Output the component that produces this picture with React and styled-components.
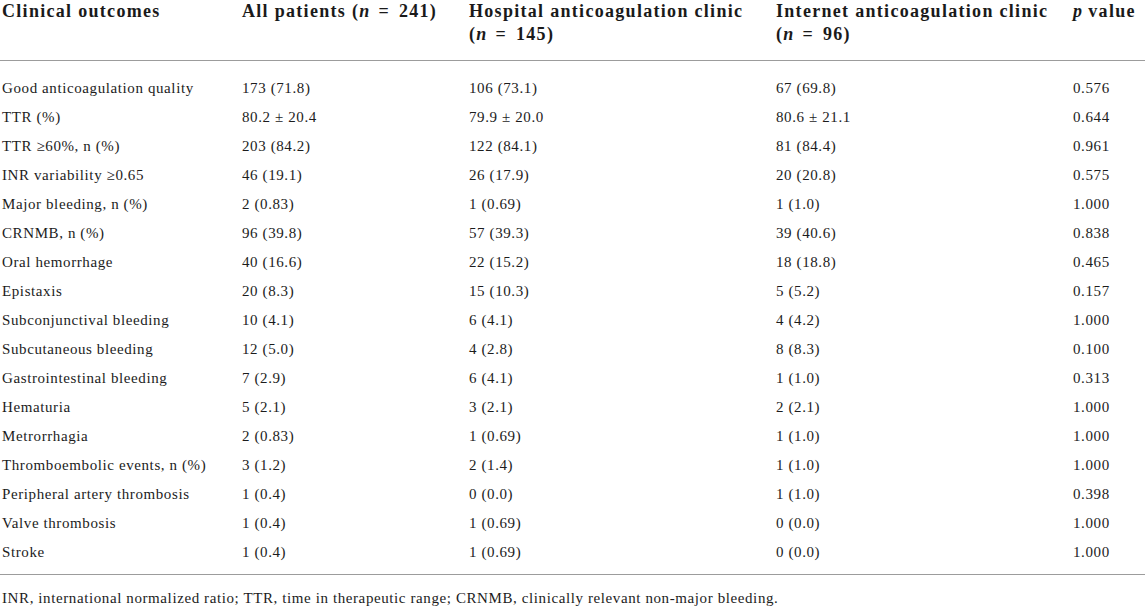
import React from 'react';
import styled, { createGlobalStyle } from 'styled-components';

const GlobalStyle = createGlobalStyle`
  html, body {
    margin: 0;
    padding: 0;
    background: #ffffff;
  }
  body {
    font-family: 'Liberation Serif', 'Times New Roman', serif;
    color: #1c1c1c;
    overflow: hidden;
  }
`;

const Wrapper = styled.div`
  width: 1145px;
  height: 613px;
  overflow: hidden;
`;

const Table = styled.table`
  width: 1145px;
  border-collapse: collapse;
  table-layout: fixed;
`;

const HeadCell = styled.th`
  text-align: left;
  vertical-align: top;
  padding: 0 0 14px 2px;
  font-size: 18px;
  line-height: 23px;
  font-weight: 700;
  letter-spacing: 1.3px;
  color: #1a1a1a;
  white-space: nowrap;
  border-bottom: 1px solid #9c9c9c;
`;

const Italic = styled.i`
  font-weight: 700;
  letter-spacing: 0.5px;
`;

const Eq = styled.span`
  padding: 0 3px;
`;

const Spacer = styled.tr`
  height: ${({ size }) => size}px;
`;

const Row = styled.tr`
  height: 29px;
`;

const Cell = styled.td`
  padding: 0 0 0 2px;
  font-size: 15px;
  line-height: 29px;
  letter-spacing: 0.6px;
  white-space: nowrap;
  vertical-align: middle;
`;

const BottomRule = styled.tr`
  height: 8px;
  td {
    border-bottom: 1px solid #9c9c9c;
    padding: 0;
  }
`;

const Footnote = styled.p`
  margin: 13px 0 0;
  padding-left: 2px;
  font-size: 15px;
  line-height: 20px;
  letter-spacing: 0.6px;
  white-space: nowrap;
`;

const rows = [
  ['Good anticoagulation quality', '173 (71.8)', '106 (73.1)', '67 (69.8)', '0.576'],
  ['TTR (%)', '80.2 ± 20.4', '79.9 ± 20.0', '80.6 ± 21.1', '0.644'],
  ['TTR ≥60%, n (%)', '203 (84.2)', '122 (84.1)', '81 (84.4)', '0.961'],
  ['INR variability ≥0.65', '46 (19.1)', '26 (17.9)', '20 (20.8)', '0.575'],
  ['Major bleeding, n (%)', '2 (0.83)', '1 (0.69)', '1 (1.0)', '1.000'],
  ['CRNMB, n (%)', '96 (39.8)', '57 (39.3)', '39 (40.6)', '0.838'],
  ['Oral hemorrhage', '40 (16.6)', '22 (15.2)', '18 (18.8)', '0.465'],
  ['Epistaxis', '20 (8.3)', '15 (10.3)', '5 (5.2)', '0.157'],
  ['Subconjunctival bleeding', '10 (4.1)', '6 (4.1)', '4 (4.2)', '1.000'],
  ['Subcutaneous bleeding', '12 (5.0)', '4 (2.8)', '8 (8.3)', '0.100'],
  ['Gastrointestinal bleeding', '7 (2.9)', '6 (4.1)', '1 (1.0)', '0.313'],
  ['Hematuria', '5 (2.1)', '3 (2.1)', '2 (2.1)', '1.000'],
  ['Metrorrhagia', '2 (0.83)', '1 (0.69)', '1 (1.0)', '1.000'],
  ['Thromboembolic events, n (%)', '3 (1.2)', '2 (1.4)', '1 (1.0)', '1.000'],
  ['Peripheral artery thrombosis', '1 (0.4)', '0 (0.0)', '1 (1.0)', '0.398'],
  ['Valve thrombosis', '1 (0.4)', '1 (0.69)', '0 (0.0)', '1.000'],
  ['Stroke', '1 (0.4)', '1 (0.69)', '0 (0.0)', '1.000'],
];

const Count = ({ n }) => (
  <>
    (<Italic>n</Italic>
    <Eq> = </Eq>
    {n})
  </>
);

const App = () => (
  <Wrapper>
    <GlobalStyle />
    <Table>
      <colgroup>
        <col style={{ width: 240 }} />
        <col style={{ width: 227 }} />
        <col style={{ width: 307 }} />
        <col style={{ width: 297 }} />
        <col style={{ width: 74 }} />
      </colgroup>
      <thead>
        <tr>
          <HeadCell>Clinical outcomes</HeadCell>
          <HeadCell>
            All patients <Count n={241} />
          </HeadCell>
          <HeadCell>
            Hospital anticoagulation clinic
            <br />
            <Count n={145} />
          </HeadCell>
          <HeadCell>
            Internet anticoagulation clinic
            <br />
            <Count n={96} />
          </HeadCell>
          <HeadCell>
            <Italic>p</Italic> value
          </HeadCell>
        </tr>
      </thead>
      <tbody>
        <Spacer size={13} />
        {rows.map(r => (
          <Row key={r[0]}>
            {r.map((c, i) => (
              <Cell key={i}>{c}</Cell>
            ))}
          </Row>
        ))}
        <BottomRule>
          <td colSpan={5} />
        </BottomRule>
      </tbody>
    </Table>
    <Footnote>
      INR, international normalized ratio; TTR, time in therapeutic range; CRNMB, clinically
      relevant non-major bleeding.
    </Footnote>
  </Wrapper>
);

export default App;
